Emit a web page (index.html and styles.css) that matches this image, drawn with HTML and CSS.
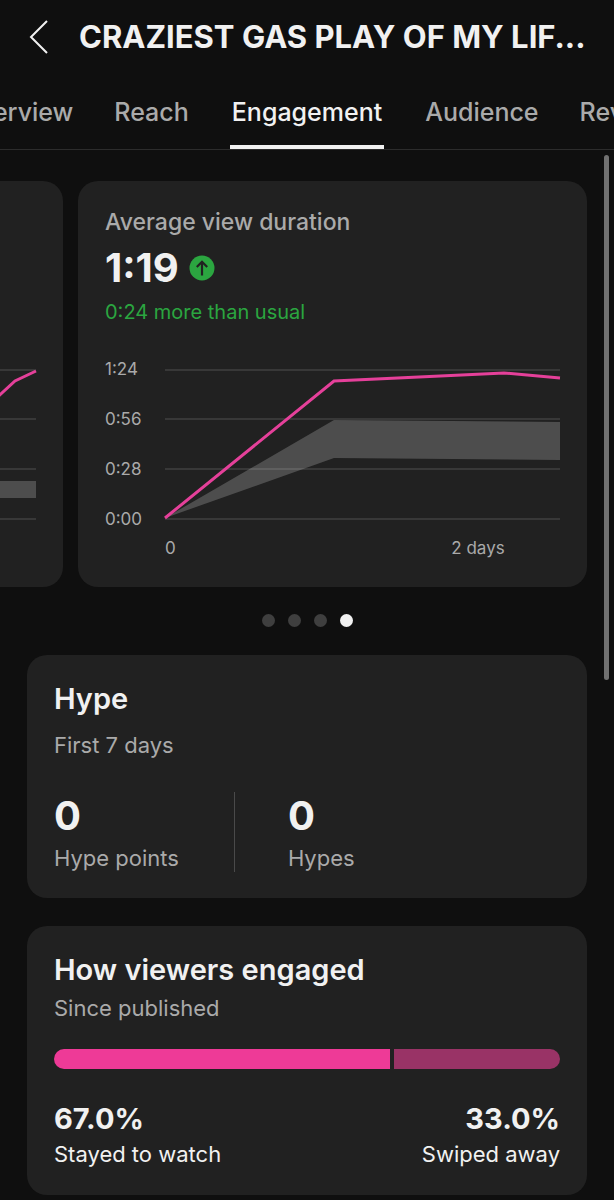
FILE: index.html
```html
<!DOCTYPE html>
<html lang="en">
<head>
    <meta charset="UTF-8">
    <meta name="viewport" content="width=device-width, initial-scale=1.0">
    <title>Video analytics - Engagement</title>
    <link rel="stylesheet" href="styles.css">
</head>
<body>
    <header class="header">
        <button type="button" class="back-btn" aria-label="Back">
            <svg width="20" height="36" viewBox="0 0 20 36">
                <path d="M18 2 L2 18 L18 34" fill="none" stroke="currentColor" stroke-width="2"/>
            </svg>
        </button>
        <h1 class="title">CRAZIEST GAS PLAY OF MY LIF...</h1>
    </header>

    <nav class="tabs">
        <div class="tabs-side tabs-before">
            <a href="#overview" class="tab">Overview</a>
            <a href="#reach" class="tab">Reach</a>
        </div>
        <a href="#engagement" class="tab active" aria-current="page">Engagement</a>
        <div class="tabs-side">
            <a href="#audience" class="tab">Audience</a>
            <a href="#revenue" class="tab">Revenue</a>
        </div>
    </nav>

    <main class="content">
        <div class="scroll-thumb"></div>

        <section class="carousel">
            <article class="card slide slide-prev">
                <div class="plot">
                    <svg class="chart" viewBox="0 0 395 150" preserveAspectRatio="none">
                        <path class="grid-line" d="M0 1H395M0 50H395M0 100H395M0 150H395"/>
                        <path class="band" d="M0 150 L169 112 H395 V129 H169 Z"/>
                        <path class="line" d="M0 150 L340 43 L374 12 L395 2"/>
                    </svg>
                </div>
            </article>

            <article class="card slide">
                <h2 class="metric-name">Average view duration</h2>
                <div class="metric-row">
                    <span class="big-value">1:19</span>
                    <svg class="up-icon" width="26" height="26" viewBox="0 0 26 26">
                        <circle cx="13" cy="13" r="12.5" fill="#2ba640"/>
                        <path d="M13 20.5V7M7.8 12L13 6.8L18.2 12" fill="none" stroke="#212121" stroke-width="2.2"/>
                    </svg>
                </div>
                <p class="delta">0:24 more than usual</p>

                <div class="chart-area">
                    <div class="y-axis">
                        <span>1:24</span>
                        <span>0:56</span>
                        <span>0:28</span>
                        <span>0:00</span>
                    </div>
                    <div class="plot">
                        <svg class="chart" viewBox="0 0 395 150" preserveAspectRatio="none">
                            <path class="grid-line" d="M0 1H395M0 50H395M0 100H395M0 150H395"/>
                            <path class="band" d="M0 149 L169 51 L395 53 V91 L169 89 Z"/>
                            <path class="line" d="M0 149 L169 12 L339 4 L395 9"/>
                        </svg>
                    </div>
                    <div class="x-axis">
                        <span>0</span>
                        <span>2 days</span>
                    </div>
                </div>
            </article>
        </section>

        <div class="dots">
            <button type="button" class="dot" aria-label="Card 1"></button>
            <button type="button" class="dot" aria-label="Card 2"></button>
            <button type="button" class="dot" aria-label="Card 3"></button>
            <button type="button" class="dot current" aria-label="Card 4"></button>
        </div>

        <section class="card hype">
            <h2 class="card-title">Hype</h2>
            <p class="card-sub">First 7 days</p>
            <div class="stats">
                <div class="stat">
                    <span class="big-value">0</span>
                    <span class="stat-label">Hype points</span>
                </div>
                <div class="stat">
                    <span class="big-value">0</span>
                    <span class="stat-label">Hypes</span>
                </div>
            </div>
        </section>

        <section class="card engaged">
            <h2 class="card-title">How viewers engaged</h2>
            <p class="card-sub">Since published</p>
            <div class="bar">
                <div class="bar-stayed" style="flex-grow: 67"></div>
                <div class="bar-swiped" style="flex-grow: 33"></div>
            </div>
            <div class="split">
                <div class="split-item">
                    <span class="percent">67.0%</span>
                    <span class="split-label">Stayed to watch</span>
                </div>
                <div class="split-item split-right">
                    <span class="percent">33.0%</span>
                    <span class="split-label">Swiped away</span>
                </div>
            </div>
        </section>
    </main>
</body>
</html>
```
FILE: styles.css
```css
* {
    margin: 0;
    padding: 0;
    box-sizing: border-box;
    font-family: 'Inter', sans-serif;
}

body {
    background-color: #0f0f0f;
    color: #f1f1f1;
    overflow-x: hidden;
}

button {
    background: none;
    border: none;
    color: inherit;
    cursor: pointer;
}

/* header */
.header {
    display: flex;
    align-items: center;
    gap: 30px;
    height: 74px;
    padding: 0 16px 0 29px;
}

.back-btn {
    flex: none;
    width: 20px;
    height: 36px;
}

.back-btn svg {
    display: block;
}

.title {
    flex: 1;
    font-size: 31px;
    font-weight: 700;
    line-height: 40px;
    white-space: nowrap;
    overflow: hidden;
    text-overflow: ellipsis;
}

/* tabs */
.tabs {
    display: grid;
    grid-template-columns: minmax(0, 1fr) auto minmax(0, 1fr);
    column-gap: 41px;
    height: 76px;
    border-bottom: 1px solid #2c2c2c;
    overflow: hidden;
}

.tabs-side {
    display: flex;
    gap: 41px;
}

.tabs-before {
    justify-content: flex-end;
}

.tab {
    padding-top: 22px;
    border-bottom: 4px solid transparent;
    font-size: 25px;
    font-weight: 500;
    line-height: 32px;
    color: #aaaaaa;
    text-decoration: none;
}

.tab.active {
    padding-left: 2px;
    padding-right: 2px;
    color: #f1f1f1;
    border-bottom-color: #f1f1f1;
}

/* content */
.content {
    position: relative;
    padding: 31px 0 5px;
}

.scroll-thumb {
    position: absolute;
    top: 5px;
    right: 5px;
    width: 5px;
    height: 50%;
    border-radius: 3px;
    background-color: #717171;
}

.card {
    background-color: #212121;
    border-radius: 20px;
    padding: 27px;
}

.carousel {
    display: flex;
    justify-content: flex-end;
    gap: 15px;
    padding-right: 27px;
    overflow: hidden;
}

.slide {
    flex: 0 0 calc(100% - 78px);
    padding-bottom: 29px;
}

.slide-prev {
    display: flex;
    flex-direction: column;
    justify-content: flex-end;
    padding-left: 87px;
    padding-bottom: 58px;
}

.metric-name {
    font-size: 23px;
    font-weight: 500;
    line-height: 28px;
    color: #aaaaaa;
}

.metric-row {
    display: flex;
    align-items: center;
    gap: 10px;
    margin: 10px 0;
}

.big-value {
    font-size: 40px;
    font-weight: 700;
    line-height: 44px;
}

.delta {
    font-size: 20px;
    line-height: 24px;
    color: #2ba640;
}

.chart-area {
    display: grid;
    grid-template-columns: 60px 1fr;
    row-gap: 9px;
    margin-top: 35px;
}

.y-axis {
    display: flex;
    flex-direction: column;
    justify-content: space-between;
}

.y-axis,
.x-axis {
    font-size: 17px;
    line-height: 20px;
    color: #aaaaaa;
}

.plot {
    padding: 10px 0;
}

.chart {
    display: block;
    width: 100%;
    height: 150px;
    overflow: visible;
}

.chart path {
    vector-effect: non-scaling-stroke;
}

.grid-line {
    fill: none;
    stroke: #383838;
    stroke-width: 2;
}

.band {
    fill: #ffffff;
    fill-opacity: 0.2;
}

.line {
    fill: none;
    stroke: #e5409a;
    stroke-width: 3;
}

.x-axis {
    grid-column: 2;
    display: flex;
    justify-content: space-between;
    padding-right: 14%;
}

.dots {
    display: flex;
    justify-content: center;
    gap: 13px;
    margin: 27px 0 28px;
}

.dot {
    width: 13px;
    height: 13px;
    border-radius: 50%;
    background-color: #3f3f3f;
}

.dot.current {
    background-color: #f1f1f1;
}

/* hype */
.hype,
.engaged {
    margin: 0 27px;
}

.hype {
    padding-bottom: 26px;
    margin-bottom: 28px;
}

.card-title {
    font-size: 29px;
    font-weight: 600;
    line-height: 34px;
}

.card-sub,
.stat-label,
.split-label {
    font-size: 22px;
    line-height: 28px;
}

.card-sub,
.stat-label {
    color: #aaaaaa;
}

.hype .card-sub {
    margin-top: 15px;
}

.stats {
    display: flex;
    margin-top: 33px;
}

.stat {
    display: flex;
    flex-direction: column;
    gap: 6px;
    padding-top: 2px;
}

.stat + .stat {
    margin-left: 55px;
    padding-left: 53px;
    border-left: 1px solid #4a4a4a;
}

/* engagement */
.engaged .card-sub {
    margin-top: 7px;
}

.bar {
    display: flex;
    gap: 4px;
    height: 20px;
    margin-top: 27px;
    border-radius: 10px;
    overflow: hidden;
}

.bar-stayed {
    background-color: #ee3a97;
}

.bar-swiped {
    background-color: #993366;
}

.split {
    display: flex;
    justify-content: space-between;
    margin-top: 33px;
}

.split-item {
    display: flex;
    flex-direction: column;
    gap: 4px;
}

.split-right {
    text-align: right;
}

.percent {
    font-size: 29px;
    font-weight: 700;
    line-height: 34px;
}
```
